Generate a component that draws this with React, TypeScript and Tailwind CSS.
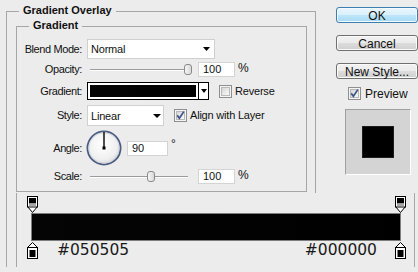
import React from "react";

function Label({ children }: { children: React.ReactNode }) {
  return (
    <div className="w-[65px] shrink-0 text-right tracking-[-0.4px] leading-[13px]">
      {children}
    </div>
  );
}

function Arrow({ w = 7 }: { w?: number }) {
  return (
    <svg width={w} height="4" viewBox={`0 0 ${w} 4`} className="shrink-0">
      <path d={`M0 0H${w}L${w / 2} 4Z`} fill="#000" />
    </svg>
  );
}

function Check({ checked }: { checked?: boolean }) {
  return (
    <div className="w-[13px] h-[13px] shrink-0 border border-[#8f8f8f] bg-[#f4f4f4] p-[1px]">
      <div className="w-full h-full border border-[#b9b9b9] bg-[linear-gradient(135deg,#d6d6d6,#fafafa)] flex items-center justify-center">
        {checked && (
          <svg width="9" height="9" viewBox="0 0 9 9" className="overflow-visible">
            <path d="M1.2 4.4 L3.4 7.2 L7.8 0.6" fill="none" stroke="#3e5488" strokeWidth="1.7" />
          </svg>
        )}
      </div>
    </div>
  );
}

function Slider({ thumb }: { thumb: string }) {
  return (
    <div className="relative w-[98px] h-[15px] shrink-0">
      <div className="absolute left-0 right-0 top-[7px] h-[2px] border-t border-[#9c9c9c] bg-white" />
      <div
        className={`absolute top-[2px] w-[8px] h-[11px] rounded-[3px] border border-[#8a8a8a] bg-[linear-gradient(to_right,#f6f6f6,#d9d9d9)] ${thumb}`}
      />
    </div>
  );
}

function Input({ value, w }: { value: string; w: string }) {
  return (
    <div
      className={`${w} h-[15px] shrink-0 bg-white border border-[#d4d4d4] flex items-center pl-[4px] leading-none`}
    >
      {value}
    </div>
  );
}

function TopStop() {
  return (
    <svg width="11" height="17" viewBox="0 0 11 17" className="shrink-0">
      <path d="M0.5 10.5 L5.5 16.5 L10.5 10.5 Z" fill="#fff" stroke="#000" strokeWidth="1" />
      <rect x="0.5" y="0.5" width="10" height="10.5" fill="#fff" stroke="#000" strokeWidth="1" />
      <rect x="2" y="2" width="7" height="5.5" fill="#000" />
      <rect x="2" y="7.5" width="7" height="2.5" fill="#a8a8a8" />
    </svg>
  );
}

function BottomStop() {
  return (
    <svg width="11" height="17" viewBox="0 0 11 17" className="shrink-0">
      <path d="M5.5 0.5 L0.5 5.5 H10.5 Z" fill="#fff" stroke="#000" strokeWidth="1" />
      <rect x="0.5" y="5.5" width="10" height="11" fill="#fff" stroke="#000" strokeWidth="1" />
      <rect x="2.5" y="8" width="6" height="7" fill="#000" />
    </svg>
  );
}

function Dial() {
  return (
    <svg width="36" height="36" viewBox="0 0 36 36" className="shrink-0">
      <defs>
        <radialGradient id="dg" cx="45%" cy="40%" r="60%">
          <stop offset="0%" stopColor="#ffffff" />
          <stop offset="75%" stopColor="#efefef" />
          <stop offset="100%" stopColor="#d8d8d8" />
        </radialGradient>
      </defs>
      <circle cx="18" cy="18" r="16.6" fill="url(#dg)" stroke="#4d5d80" strokeWidth="1.8" />
      <circle cx="18" cy="18" r="15.2" fill="none" stroke="#c9d0dc" strokeWidth="0.8" />
      <line x1="18" y1="2" x2="18" y2="18" stroke="#000" strokeWidth="1.4" />
      <rect x="16.5" y="16.5" width="3" height="3" fill="#000" />
    </svg>
  );
}

const btn =
  "h-[16px] w-[82px] rounded-[3px] border border-[#707070] bg-[linear-gradient(#f2f2f2_0%,#ebebeb_50%,#dddddd_50%,#cfcfcf_100%)] shadow-[inset_0_0_0_1px_#fbfbfb] flex items-center justify-center text-[12px] leading-none pt-[1px]";

export default function App() {
  return (
    <div className="relative w-[418px] h-[272px] overflow-hidden bg-[#ececec] text-[11px] text-[#111] font-['Liberation_Sans',Arial,sans-serif]">
      <div className="flex items-start">
        {/* Outer group */}
        <div className="relative ml-[6px] mt-[11px] w-[310px] h-[256px] shrink-0 border-l border-t border-r border-[#a6a6a6]">
          <span className="absolute left-[12px] -top-[8px] px-[4px] bg-[#ececec] font-bold leading-[13px]">
            Gradient Overlay
          </span>

          {/* Inner group */}
          <div className="relative ml-[9px] mt-[14px] w-[291px] h-[166px] border border-[#a6a6a6] flex flex-col">
            <span className="absolute left-[12px] -top-[8px] px-[4px] bg-[#ececec] font-bold leading-[13px]">
              Gradient
            </span>

            {/* Blend Mode */}
            <div className="mt-[12px] h-[20px] flex items-center">
              <Label>Blend Mode:</Label>
              <div className="ml-[5px] w-[128px] h-[20px] bg-white border border-[#d0d0d0] flex items-center justify-between pl-[3px] pr-[4px]">
                <span className="tracking-[-0.2px] pt-[1px]">Normal</span>
                <Arrow />
              </div>
            </div>

            {/* Opacity */}
            <div className="mt-[3px] h-[15px] flex items-center">
              <Label>Opacity:</Label>
              <div className="ml-[8px]">
                <Slider thumb="left-[94px]" />
              </div>
              <div className="ml-[10px]">
                <Input value="100" w="w-[37px]" />
              </div>
              <span className="ml-[3px] -mt-[3px] text-[12px]">%</span>
            </div>

            {/* Gradient */}
            <div className="mt-[5px] h-[18px] flex items-center">
              <Label>Gradient:</Label>
              <div className="ml-[5px] w-[122px] h-[18px] border border-black bg-white flex">
                <div className="flex-1 p-[2px]">
                  <div className="w-full h-full bg-[linear-gradient(to_right,#050505,#000000)]" />
                </div>
                <div className="w-[10px] border-l border-black flex items-center justify-center">
                  <Arrow w={6} />
                </div>
              </div>
              <div className="ml-[10px]">
                <Check />
              </div>
              <span className="ml-[3px] text-[11px] tracking-[-0.2px]">Reverse</span>
            </div>

            {/* Style */}
            <div className="mt-[5px] h-[21px] flex items-center">
              <Label>Style:</Label>
              <div className="ml-[5px] w-[77px] h-[21px] bg-white border border-[#d0d0d0] flex items-center justify-between pl-[3px] pr-[2px]">
                <span className="tracking-[-0.2px] pt-[1px]">Linear</span>
                <Arrow w={8} />
              </div>
              <div className="ml-[10px]">
                <Check checked />
              </div>
              <span className="ml-[3px] tracking-[-0.2px]">Align with Layer</span>
            </div>

            {/* Angle */}
            <div className="mt-[4px] h-[36px] flex items-center">
              <Label>Angle:</Label>
              <div className="ml-[4px]">
                <Dial />
              </div>
              <div className="ml-[5px]">
                <Input value="90" w="w-[41px]" />
              </div>
              <span className="ml-[3px] self-start mt-[8px] text-[12px] leading-[12px]">°</span>
            </div>

            {/* Scale */}
            <div className="mt-[3px] h-[15px] flex items-center">
              <Label>Scale:</Label>
              <div className="ml-[8px]">
                <Slider thumb="left-[57px]" />
              </div>
              <div className="ml-[10px]">
                <Input value="100" w="w-[37px]" />
              </div>
              <span className="ml-[3px] -mt-[3px] text-[12px]">%</span>
            </div>
          </div>
        </div>

        {/* Right column */}
        <div className="ml-[20px] w-[82px] shrink-0 flex flex-col">
          <div className="mt-[7px] h-[16px] w-[82px] rounded-[3px] border border-[#3c7fb1] bg-[linear-gradient(#eaf6fd_0%,#d9f0fc_50%,#bee6fd_50%,#a7d9f5_100%)] shadow-[inset_0_0_0_1px_#f4fbff] flex items-center justify-center text-[12px] leading-none pt-[1px]">
            OK
          </div>
          <div className={`mt-[12px] ${btn}`}>Cancel</div>
          <div className={`mt-[12px] ${btn}`}>New Style...</div>
          <div className="mt-[8px] ml-[12px] flex items-center h-[13px]">
            <Check checked />
            <span className="ml-[4px] text-[12px] leading-none">Preview</span>
          </div>
          <div className="mt-[9px] ml-[9px] w-[66px] h-[66px] border border-t-[#a0a0a0] border-l-[#a0a0a0] border-r-white border-b-white bg-[#d4d4d4] flex items-center justify-center">
            <div className="w-[32px] h-[32px] bg-black border border-[#1c1c1c]" />
          </div>
        </div>
      </div>

      {/* Gradient editor strip overlaid at the bottom */}
      <div className="absolute left-[16px] top-[193px] w-[399px] h-[74px] border-l border-r border-[#a6a6a6] bg-[#ececec] flex flex-col">
        <div className="mt-[3px] h-[17px] flex justify-between pl-[10px] pr-[8px]">
          <TopStop />
          <TopStop />
        </div>
        <div className="ml-[14px] w-[370px] h-[28px] border border-[#7d7d7d] bg-[linear-gradient(to_right,#050505,#000000)]" />
        <div className="mt-[1px] h-[17px] flex items-start pl-[10px] pr-[8px] font-['DejaVu_Sans',sans-serif] text-[15.5px] leading-[16px] text-[#1a1a1a]">
          <BottomStop />
          <span className="ml-[19px]">#050505</span>
          <span className="ml-auto mr-[18px]">#000000</span>
          <BottomStop />
        </div>
      </div>
    </div>
  );
}
